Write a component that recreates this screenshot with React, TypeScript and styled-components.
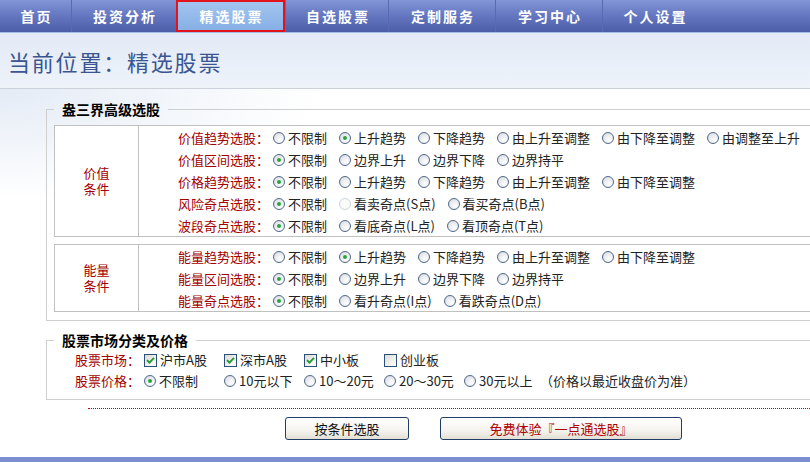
import styled, { createGlobalStyle } from "styled-components";

const GlobalStyle = createGlobalStyle`
html, body {
  margin: 0;
  padding: 0;
  overflow: hidden;
  background: #fff;
}
body {
  font-family: "Noto Sans CJK SC", "Liberation Sans", sans-serif;
  font-size: 13px;
  color: #222;
}
`;

const Page = styled.div`
width: 1000px;
`;

const Nav = styled.nav`
display: flex;
height: 32px;
background: linear-gradient(to bottom, #8296d7 0%, #6679c2 45%, #4b5da7 100%);
border-bottom: 1px solid #a6bde8;
`;

const NavItem = styled.a<{ $w: number; $active?: boolean }>`
box-sizing: border-box;
width: ${p => p.$w}px;
display: flex;
align-items: center;
justify-content: center;
color: #fff;
font-size: 14px;
font-weight: 700;
letter-spacing: 2px;
text-indent: 2px;
cursor: pointer;
border-left: 1px solid ${p => p.$active ? "transparent" : "#586bb2"};
&:first-child { border-left: none; }
${p => p.$active && `
  border: 2px solid #e3131c;
  background: linear-gradient(to bottom, #a3c4ef, #86b0e6);
`}
`;

const Header = styled.div`
height: 55px;
display: flex;
align-items: center;
padding-left: 8px;
background: linear-gradient(to bottom, #e3eaf6, #eef3fa);
border-bottom: 1px solid #cdd2da;
`;

const Title = styled.h1`
margin: 0;
font-size: 22px;
font-weight: 400;
letter-spacing: 1.8px;
color: #3a5590;
`;

const Main = styled.div`
background: radial-gradient(ellipse 320px 110px at 0 0, #e4ebf6, rgba(255, 255, 255, 0)), #fff;
padding: 11px 0 17px 46px;
`;

const Fieldset = styled.fieldset<{ $top?: number; $pt?: number }>`
margin: ${p => p.$top ?? 0}px 0 0 0;
padding: ${p => p.$pt ?? 7}px 0 8px 7px;
border: 1px solid #cfcfcf;
min-width: 0;
`;

const Legend = styled.legend`
padding: 0 8px;
font-size: 14px;
font-weight: 700;
line-height: 18px;
color: #000;
`;

const CondTable = styled.div<{ $gap?: number }>`
display: grid;
grid-template-columns: 84px 1fr;
border: 1px solid #c0c0c0;
background: #fff;
margin-top: ${p => p.$gap ?? 0}px;
`;

const GroupCell = styled.div`
border-right: 1px solid #c0c0c0;
display: flex;
align-items: center;
justify-content: center;
text-align: center;
color: #a30000;
font-size: 13px;
line-height: 16px;
`;

const RowList = styled.div`
display: flex;
flex-direction: column;
`;

const Row = styled.div<{ $h?: number }>`
display: flex;
align-items: center;
height: ${p => p.$h ?? 22}px;
white-space: nowrap;
`;

const RowLabel = styled.span<{ $w: number }>`
width: ${p => p.$w}px;
flex: none;
text-align: right;
color: #a30000;
`;

const Option = styled.label<{ $cell?: number }>`
display: inline-flex;
align-items: center;
margin-right: ${p => p.$cell ? 0 : 8}px;
width: ${p => p.$cell ? `${p.$cell}px` : "auto"};
flex: none;
cursor: pointer;
`;

const Radio = styled.span<{ $on?: boolean; $faint?: boolean }>`
position: relative;
box-sizing: border-box;
flex: none;
width: 12px;
height: 12px;
margin: 1px 3px 0 4px;
border-radius: 50%;
border: 1px solid ${p => p.$faint ? "#ccd5e0" : "#50688a"};
background: ${p => p.$faint
  ? "#fbfbfb"
  : "radial-gradient(circle at 65% 70%, #ffffff 0%, #e6e8ec 60%, #cfd3da 100%)"};
&::after {
  content: "";
  display: ${p => p.$on ? "block" : "none"};
  position: absolute;
  left: 3px;
  top: 3px;
  width: 4px;
  height: 4px;
  border-radius: 50%;
  background: #2aa43a;
}
`;

const Check = styled.span`
box-sizing: border-box;
flex: none;
width: 13px;
height: 13px;
margin: 1px 3px 0 4px;
border: 1px solid #2b4f78;
background: linear-gradient(135deg, #dcdcd4, #ffffff);
display: flex;
align-items: center;
justify-content: center;
`;

const Note = styled.span`
color: #222;
`;

const Actions = styled.div`
margin: 8px 0 0 42px;
border-top: 1px dotted #c00000;
padding: 8px 0 0 197px;
display: flex;
gap: 31px;
`;

const Button = styled.button<{ $w: number; $red?: boolean }>`
width: ${p => p.$w}px;
height: 23px;
padding: 0;
border: 1px solid #1f3d66;
border-radius: 3px;
background: linear-gradient(to bottom, #ffffff 0%, #f4f3ee 60%, #e2dfd4 100%);
font-family: inherit;
font-size: 13px;
color: ${p => p.$red ? "#b00000" : "#111"};
cursor: pointer;
`;

const BottomBar = styled.div`
height: 6px;
background: #7b8fd0;
`;

type Opt = { t: string; on?: boolean; faint?: boolean };
type CondRow = { label: string; opts: Opt[] };

const trend = (on: number, six: boolean): Opt[] => {
  const names = ["不限制", "上升趋势", "下降趋势", "由上升至调整", "由下降至调整", "由调整至上升"];
  return (six ? names : names.slice(0, 5)).map((t, i) => ({ t, on: i === on }));
};
const range = (): Opt[] =>
  ["不限制", "边界上升", "边界下降", "边界持平"].map((t, i) => ({ t, on: i === 0 }));

const valueRows: CondRow[] = [
  { label: "价值趋势选股：", opts: trend(1, true) },
  { label: "价值区间选股：", opts: range() },
  { label: "价格趋势选股：", opts: trend(0, false) },
  { label: "风险奇点选股：", opts: [{ t: "不限制", on: true }, { t: "看卖奇点(S点)", faint: true }, { t: "看买奇点(B点)" }] },
  { label: "波段奇点选股：", opts: [{ t: "不限制", on: true }, { t: "看底奇点(L点)" }, { t: "看顶奇点(T点)" }] },
];

const energyRows: CondRow[] = [
  { label: "能量趋势选股：", opts: trend(1, false) },
  { label: "能量区间选股：", opts: range() },
  { label: "能量奇点选股：", opts: [{ t: "不限制", on: true }, { t: "看升奇点(I点)" }, { t: "看跌奇点(D点)" }] },
];

const navItems = [
  { t: "首页", w: 71 },
  { t: "投资分析", w: 105 },
  { t: "精选股票", w: 109, active: true },
  { t: "自选股票", w: 103 },
  { t: "定制服务", w: 107 },
  { t: "学习中心", w: 107 },
  { t: "个人设置", w: 104 },
];

function CheckMark() {
  return (
    <svg width="9" height="9" viewBox="0 0 9 9">
      <path d="M1 4.2 L3.4 6.6 L8 1.8" fill="none" stroke="#1f9a2e" strokeWidth="1.8" />
    </svg>
  );
}

function Condition({ name, rows, gap }: { name: string[]; rows: CondRow[]; gap?: number }) {
  return (
    <CondTable $gap={gap}>
      <GroupCell>
        {name[0]}<br />{name[1]}
      </GroupCell>
      <RowList>
        {rows.map(r => (
          <Row key={r.label}>
            <RowLabel $w={130}>{r.label}</RowLabel>
            {r.opts.map(o => (
              <Option key={o.t}>
                <Radio $on={o.on} $faint={o.faint} />
                {o.t}
              </Option>
            ))}
          </Row>
        ))}
      </RowList>
    </CondTable>
  );
}

export default function App() {
  const markets = [
    { t: "沪市A股", on: true },
    { t: "深市A股", on: true },
    { t: "中小板", on: true },
    { t: "创业板", on: false },
  ];
  const prices = ["不限制", "10元以下", "10～20元", "20～30元", "30元以上"];

  return (
    <Page>
      <GlobalStyle />
      <Nav>
        {navItems.map(n => (
          <NavItem key={n.t} $w={n.w} $active={n.active}>{n.t}</NavItem>
        ))}
      </Nav>
      <Header>
        <Title>当前位置：精选股票</Title>
      </Header>
      <Main>
        <Fieldset>
          <Legend>盎三界高级选股</Legend>
          <Condition name={["价值", "条件"]} rows={valueRows} />
          <Condition name={["能量", "条件"]} rows={energyRows} gap={7} />
        </Fieldset>

        <Fieldset $top={10} $pt={0}>
          <Legend>股票市场分类及价格</Legend>
          <Row $h={21}>
            <RowLabel $w={86}>股票市场：</RowLabel>
            {markets.map(m => (
              <Option key={m.t} $cell={80}>
                <Check>{m.on && <CheckMark />}</Check>
                {m.t}
              </Option>
            ))}
          </Row>
          <Row $h={21}>
            <RowLabel $w={86}>股票价格：</RowLabel>
            {prices.map((p, i) => (
              <Option key={p} $cell={80}>
                <Radio $on={i === 0} />
                {p}
              </Option>
            ))}
            <Note>（价格以最近收盘价为准）</Note>
          </Row>
        </Fieldset>

        <Actions>
          <Button $w={124}>按条件选股</Button>
          <Button $w={242} $red>免费体验『一点通选股』</Button>
        </Actions>
      </Main>
      <BottomBar />
    </Page>
  );
}
